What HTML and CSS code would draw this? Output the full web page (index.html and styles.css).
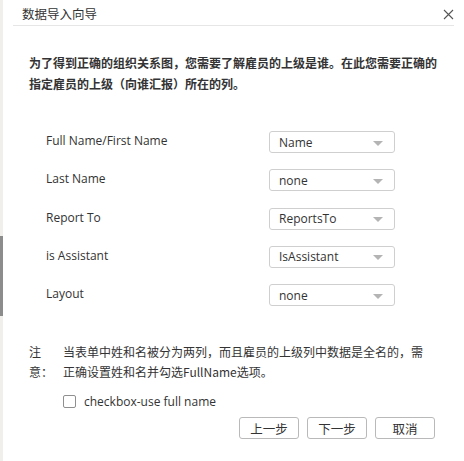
FILE: index.html
```html
<!DOCTYPE html>
<html lang="zh-CN">
<head>
<meta charset="utf-8">
<title>数据导入向导</title>
<link rel="stylesheet" href="styles.css">
</head>
<body>
<div class="page">
  <div class="edge"><div class="edge-thumb"></div></div>
  <div class="dialog">
    <div class="header">
      <span class="title">数据导入向导</span>
      <svg class="close" width="11" height="11" viewBox="0 0 11 11"><path d="M1 1L10 10M10 1L1 10" stroke="#555" stroke-width="1.1" fill="none"/></svg>
    </div>
    <div class="divider"></div>
    <p class="intro">为了得到正确的组织关系图，您需要了解雇员的上级是谁。在此您需要正确的指定雇员的上级（向谁汇报）所在的列。</p>
    <div class="form">
      <div class="row"><span class="label">Full Name/First Name</span><div class="select"><span>Name</span><i class="arrow"></i></div></div>
      <div class="row"><span class="label">Last Name</span><div class="select"><span>none</span><i class="arrow"></i></div></div>
      <div class="row"><span class="label">Report To</span><div class="select"><span>ReportsTo</span><i class="arrow"></i></div></div>
      <div class="row"><span class="label">is Assistant</span><div class="select"><span>IsAssistant</span><i class="arrow"></i></div></div>
      <div class="row"><span class="label">Layout</span><div class="select"><span>none</span><i class="arrow"></i></div></div>
    </div>
    <div class="note">
      <span class="note-head">注意：</span>
      <span class="note-text">当表单中姓和名被分为两列，而且雇员的上级列中数据是全名的，需正确设置姓和名并勾选FullName选项。</span>
    </div>
    <label class="check"><span class="box"></span><span class="check-text">checkbox-use full name</span></label>
    <div class="buttons">
      <button class="btn">上一步</button>
      <button class="btn">下一步</button>
      <button class="btn">取消</button>
    </div>
  </div>
</div>
</body>
</html>
```

FILE: styles.css
```css
* { box-sizing: border-box; }
html, body { margin: 0; padding: 0; background: #fff; }
body {
  font-family: "Open Sans", "Noto Sans CJK SC", sans-serif;
  color: #333;
  width: 464px;
  height: 461px;
  overflow: hidden;
}
.page { display: flex; height: 461px; }
.edge {
  width: 3px;
  background: #f1efeb;
  display: flex;
  flex-direction: column;
}
.edge-thumb { margin-top: 236px; height: 80px; background: #8c8c8c; }
.dialog { flex: 1; display: flex; flex-direction: column; }
.header {
  height: 25px;
  display: flex;
  align-items: center;
  justify-content: space-between;
  padding: 2px 10px 0 19px;
}
.title {
  font-family: "Noto Sans CJK SC", sans-serif;
  font-size: 12.5px;
  color: #333;
  line-height: 18px;
}
.close { display: block; margin-top: 1px; }
.divider { height: 1px; background: #e6e6e6; margin: 0 10px 0 10px; }
.intro {
  margin: 26px 0 0 26px;
  width: 414px;
  font-family: "Noto Sans CJK SC", sans-serif;
  font-weight: bold;
  font-size: 12px;
  line-height: 21px;
  color: #333;
}
.form {
  margin: 37px 0 0 43px;
  display: flex;
  flex-direction: column;
  gap: 16.3px;
}
.row { display: flex; align-items: flex-start; }
.label {
  width: 223px;
  font-size: 12px;
  line-height: 19px;
  color: #333;
}
.select {
  width: 126px;
  height: 22px;
  border: 1px solid #cfcfcf;
  border-radius: 3px;
  display: flex;
  align-items: center;
  justify-content: space-between;
  padding: 0 11px 0 9px;
  font-size: 12px;
  color: #333;
}
.arrow {
  width: 0; height: 0;
  border-left: 5px solid transparent;
  border-right: 5px solid transparent;
  border-top: 5px solid #b4b4b4;
  margin-top: 2px;
}
.note {
  margin: 36px 0 0 26px;
  display: flex;
  font-family: "Noto Sans CJK SC", sans-serif;
  font-size: 12px;
  line-height: 20px;
  color: #333;
}
.note-head { width: 34px; }
.note-text { width: 366px; }
.check {
  margin: 12px 0 0 60px;
  display: flex;
  align-items: center;
  height: 14px;
}
.box {
  width: 13px; height: 13px;
  border: 1px solid #8f8f8f;
  border-radius: 2px;
  background: #fff;
}
.check-text { margin-left: 8px; font-size: 12px; color: #333; }
.buttons {
  margin: 9px 29px 0 0;
  display: flex;
  justify-content: flex-end;
  gap: 8px;
}
.btn {
  width: 60px;
  height: 22px;
  border: 1px solid #b9b9b9;
  border-radius: 3px;
  background: #fff;
  font-family: "Noto Sans CJK SC", sans-serif;
  font-size: 12.5px;
  color: #333;
  padding: 0;
}
```
